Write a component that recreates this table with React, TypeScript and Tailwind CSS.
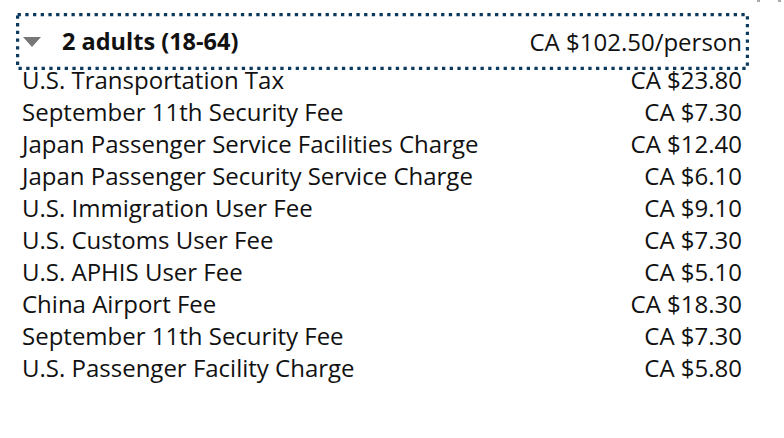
import React from "react";

interface Fee {
  label: string;
  amount: string;
}

const fees: Fee[] = [
  { label: "U.S. Transportation Tax", amount: "CA $23.80" },
  { label: "September 11th Security Fee", amount: "CA $7.30" },
  { label: "Japan Passenger Service Facilities Charge", amount: "CA $12.40" },
  { label: "Japan Passenger Security Service Charge", amount: "CA $6.10" },
  { label: "U.S. Immigration User Fee", amount: "CA $9.10" },
  { label: "U.S. Customs User Fee", amount: "CA $7.30" },
  { label: "U.S. APHIS User Fee", amount: "CA $5.10" },
  { label: "China Airport Fee", amount: "CA $18.30" },
  { label: "September 11th Security Fee", amount: "CA $7.30" },
  { label: "U.S. Passenger Facility Charge", amount: "CA $5.80" },
];

const App: React.FC = () => {
  return (
    <div className="relative w-[784px] h-[438px] bg-white text-[#111] font-['Open_Sans',sans-serif] overflow-hidden">
      {/* cut-off close icon at the corner */}
      <div className="absolute top-0 left-[757px] w-[3px] h-[2px] bg-[#aaa]" />
      <div className="absolute top-0 left-[778px] w-[3px] h-[2px] bg-[#aaa]" />

      <div className="pt-[13px] pl-[16px] w-[749px]">
        {/* focused header row, dotted focus ring */}
        <div className="relative z-0 flex items-center justify-between h-[57px] pl-[7px] pr-[7px]">
          <svg
            className="absolute inset-0 pointer-events-none"
            width="733"
            height="57"
            viewBox="0 0 733 57"
          >
            <rect
              x="1.6"
              y="1.6"
              width="729.8"
              height="53.8"
              fill="none"
              stroke="#0b3a5e"
              strokeWidth="3.2"
              strokeDasharray="3.3 4.4"
            />
          </svg>
          <div className="flex items-center">
            <svg width="18" height="10" viewBox="0 0 18 10" className="mr-[21px]">
              <polygon points="0,0 18,0 9,10" fill="#777" />
            </svg>
            <span className="font-bold text-[23.5px]">2 adults (18-64)</span>
          </div>
          <span className="text-[24px]">CA $102.50/person</span>
        </div>

        <div className="relative -mt-[6px] pl-[6px] pr-[7px]">
          {fees.map((f, i) => (
            <div key={i} className="flex justify-between h-[32px] leading-[32px] text-[24px]">
              <span>{f.label}</span>
              <span>{f.amount}</span>
            </div>
          ))}
        </div>
      </div>
    </div>
  );
};

export default App;
